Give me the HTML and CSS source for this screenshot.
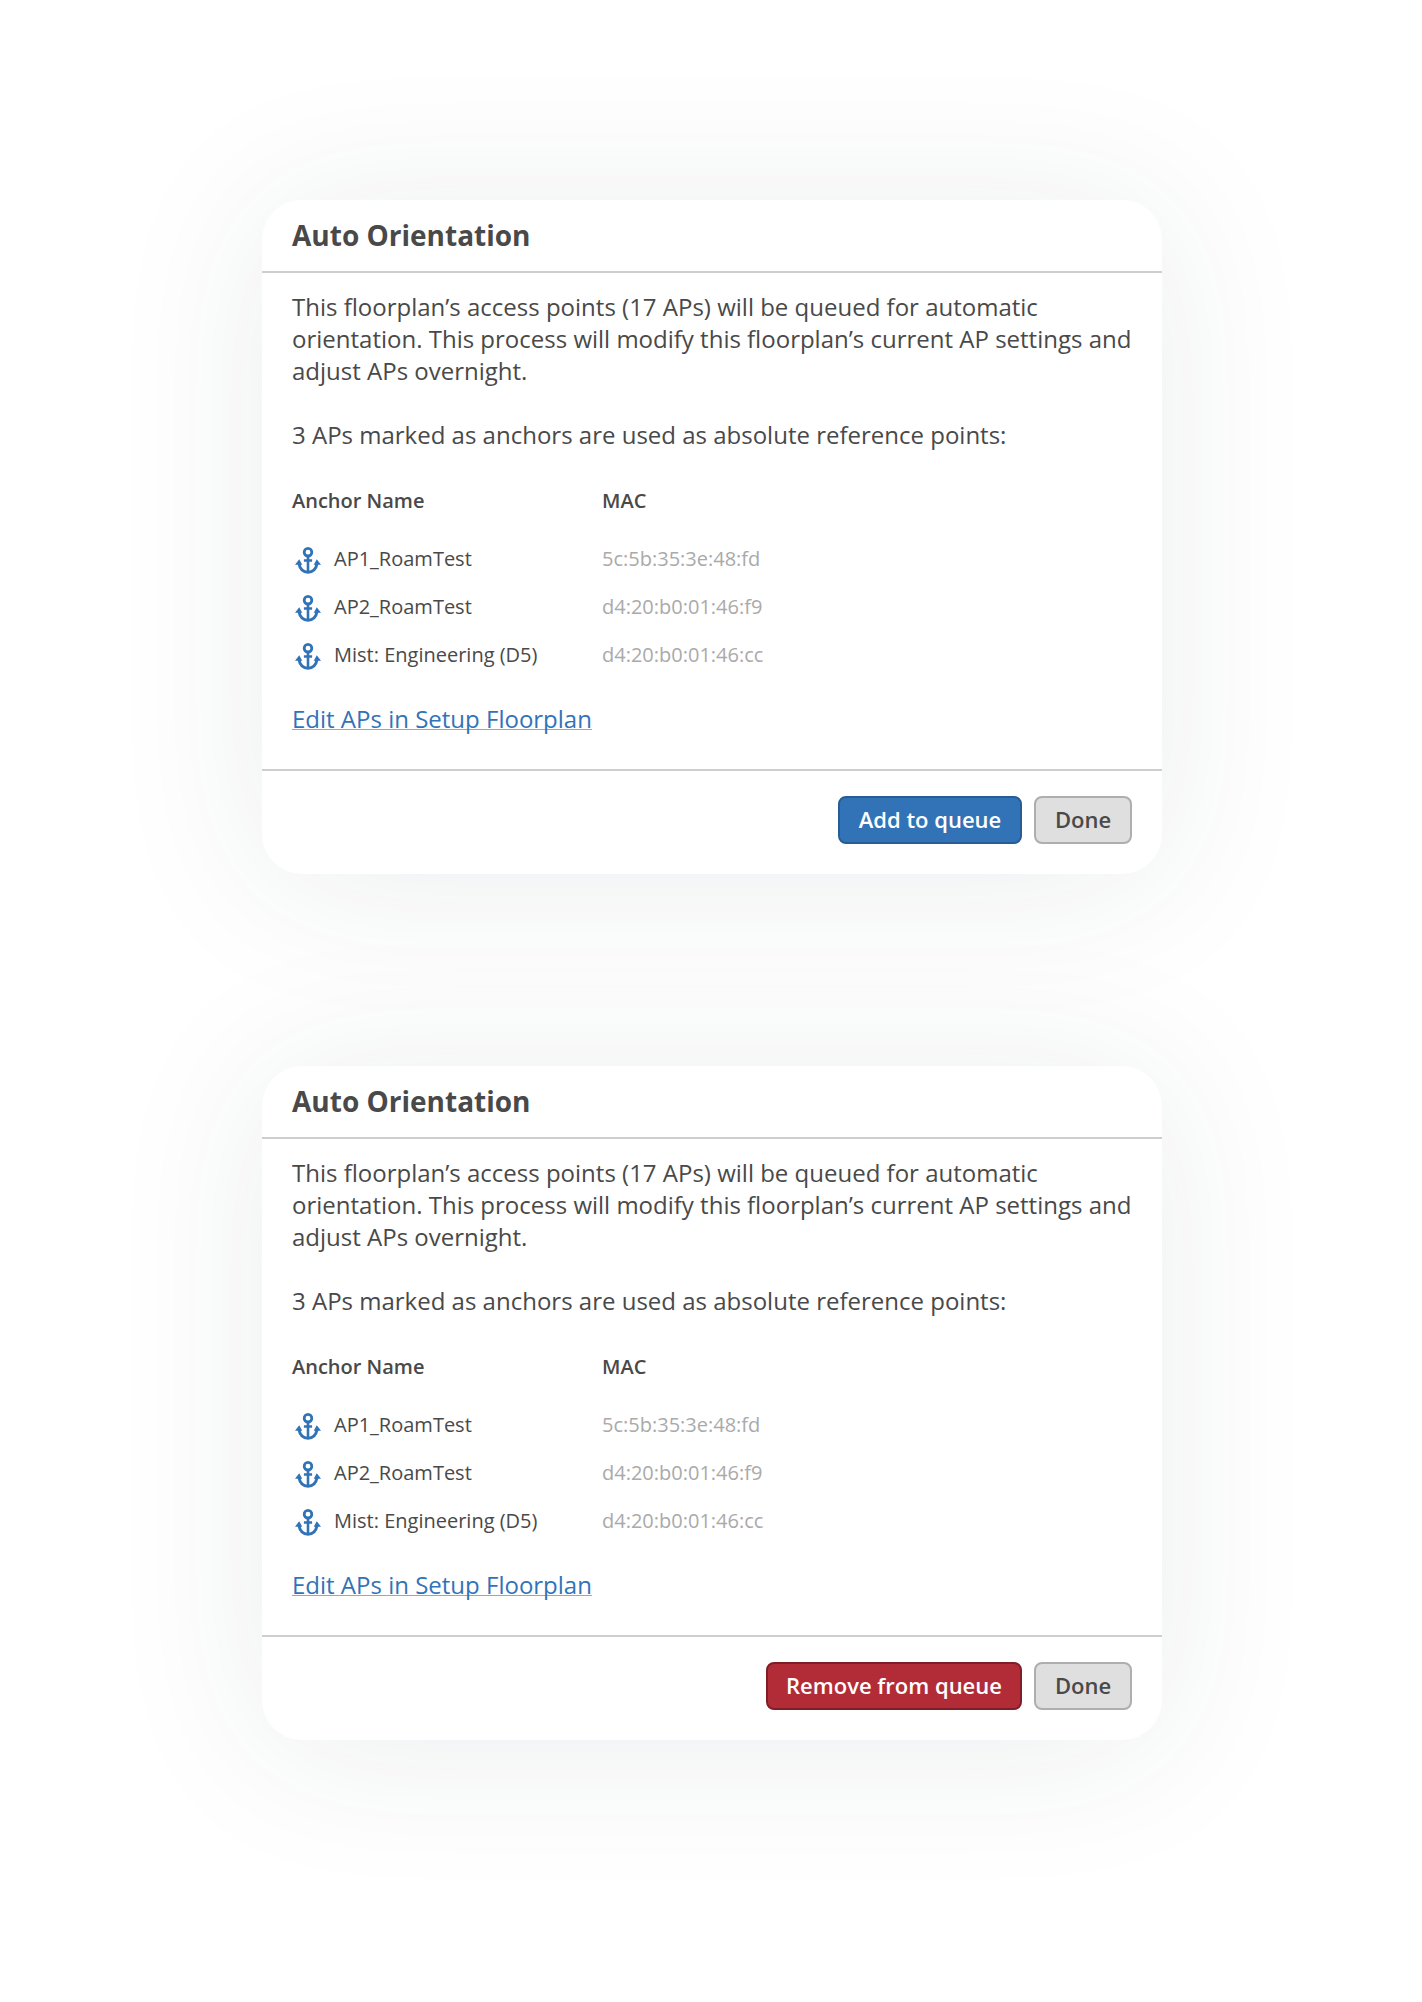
FILE: index.html
```html
<!DOCTYPE html>
<html lang="en">
<head>
<meta charset="utf-8">
<title>Auto Orientation</title>
<link rel="stylesheet" href="styles.css">
</head>
<body>
<svg class="sprite" aria-hidden="true">
  <symbol id="anchor" viewBox="0 0 26 27">
    <g fill="none" stroke="currentColor">
      <circle cx="13" cy="5.2" r="3.8" stroke-width="2.8"/>
      <path d="M13 9V25M8.900 13.500h8.200" stroke-width="2.6"/>
      <path d="M3.900 16.500C5 22 8.500 25.200 13 25.200S21 22 22.100 16.500" stroke-width="3"/>
    </g>
    <path d="M4.200 12.300L7.300 17.700H0zM21.800 12.300L26 17.700H18.700z" fill="currentColor"/>
  </symbol>
</svg>
<main class="page">
  <section class="dialog">
    <header class="dialog-header"><h2 class="title">Auto Orientation</h2></header>
    <div class="dialog-body">
      <p class="text">This floorplan’s access points (17 APs) will be queued for automatic<br>orientation. This process will modify this floorplan’s current AP settings and<br>adjust APs overnight.</p>
      <p class="text">3 APs marked as anchors are used as absolute reference points:</p>
      <div class="table">
        <div class="row head"><span>Anchor Name</span><span>MAC</span></div>
        <div class="row"><span class="name"><svg class="icon"><use href="#anchor"/></svg>AP1_RoamTest</span><span class="mac">5c:5b:35:3e:48:fd</span></div>
        <div class="row"><span class="name"><svg class="icon"><use href="#anchor"/></svg>AP2_RoamTest</span><span class="mac">d4:20:b0:01:46:f9</span></div>
        <div class="row"><span class="name"><svg class="icon"><use href="#anchor"/></svg>Mist: Engineering (D5)</span><span class="mac">d4:20:b0:01:46:cc</span></div>
      </div>
      <a class="link" href="#">Edit APs in Setup Floorplan</a>
    </div>
    <footer class="dialog-footer">
      <button class="button primary add">Add to queue</button>
      <button class="button done">Done</button>
    </footer>
  </section>
  <section class="dialog">
    <header class="dialog-header"><h2 class="title">Auto Orientation</h2></header>
    <div class="dialog-body">
      <p class="text">This floorplan’s access points (17 APs) will be queued for automatic<br>orientation. This process will modify this floorplan’s current AP settings and<br>adjust APs overnight.</p>
      <p class="text">3 APs marked as anchors are used as absolute reference points:</p>
      <div class="table">
        <div class="row head"><span>Anchor Name</span><span>MAC</span></div>
        <div class="row"><span class="name"><svg class="icon"><use href="#anchor"/></svg>AP1_RoamTest</span><span class="mac">5c:5b:35:3e:48:fd</span></div>
        <div class="row"><span class="name"><svg class="icon"><use href="#anchor"/></svg>AP2_RoamTest</span><span class="mac">d4:20:b0:01:46:f9</span></div>
        <div class="row"><span class="name"><svg class="icon"><use href="#anchor"/></svg>Mist: Engineering (D5)</span><span class="mac">d4:20:b0:01:46:cc</span></div>
      </div>
      <a class="link" href="#">Edit APs in Setup Floorplan</a>
    </div>
    <footer class="dialog-footer">
      <button class="button danger remove">Remove from queue</button>
      <button class="button done">Done</button>
    </footer>
  </section>
</main>
</body>
</html>
```
FILE: styles.css
```css
* {
  box-sizing: border-box;
}

body {
  margin: 0;
  background: #fff;
  color: #494949;
  font-family: "Open Sans", sans-serif;
}

.sprite {
  display: none;
}

.page {
  display: flex;
  flex-direction: column;
  align-items: center;
  gap: 192px;
  height: 2002px;
  padding: 200px 0 0 2px;
  overflow: hidden;
}

.dialog {
  display: flex;
  flex-direction: column;
  flex: none;
  width: 900px;
  height: 674px;
  border-radius: 40px;
  background: #fff;
  box-shadow: 0 8px 160px rgba(30, 60, 70, 0.09);
}

.dialog-header {
  display: flex;
  align-items: center;
  height: 73px;
  padding: 0 30px 2px;
  border-bottom: 2px solid #cecece;
}

.title {
  margin: 0;
  font-size: 28px;
  font-weight: 700;
  line-height: 38px;
}

.dialog-body {
  flex: 1;
  padding: 18px 30px 0;
}

.text {
  margin: 0 0 32px;
  font-size: 24px;
  line-height: 32px;
  white-space: nowrap;
}

.table {
  padding-top: 2px;
}

.row {
  display: grid;
  grid-template-columns: 310px 1fr;
  align-items: center;
  height: 48px;
  font-size: 20px;
  line-height: 28px;
}

.head {
  height: 32px;
  margin: 0 0 18px;
  font-weight: 600;
}

.name {
  display: flex;
  align-items: center;
  gap: 13px;
  padding-left: 3px;
}

.icon {
  width: 26px;
  height: 27px;
  margin-top: 3px;
  color: #3273b8;
}

.mac {
  color: #aaa;
}

.link {
  display: inline-block;
  margin-top: 24px;
  color: #3273b8;
  font-size: 24px;
  line-height: 32px;
  text-decoration: underline;
  text-decoration-color: #84abd4;
  text-decoration-thickness: 1px;
  text-decoration-skip-ink: none;
  text-underline-offset: 1px;
}

.dialog-footer {
  display: flex;
  justify-content: flex-end;
  gap: 12px;
  height: 105px;
  padding: 25px 30px 0;
  border-top: 2px solid #cecece;
}

.button {
  height: 48px;
  padding: 0 0 2px;
  border: 2px solid;
  border-radius: 8px;
  font: 600 22px/30px "Open Sans", sans-serif;
}

.add {
  width: 184px;
}

.remove {
  width: 256px;
}

.primary {
  border-color: #285c94;
  background: #3273b8;
  color: #fff;
}

.danger {
  border-color: #7f1e27;
  background: #b22c37;
  color: #fff;
}

.done {
  width: 98px;
  border-color: #aeaeae;
  background: #dfdfdf;
  color: #494949;
}
```
